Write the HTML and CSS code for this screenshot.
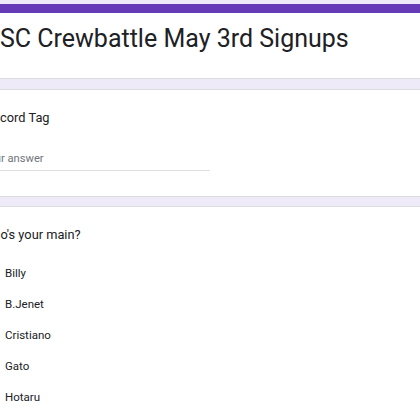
FILE: index.html
```html
<!DOCTYPE html>
<html lang="en">
<head>
<meta charset="utf-8">
<title>SC Crewbattle May 3rd Signups</title>
<link rel="stylesheet" href="styles.css">
</head>
<body>
<div class="page">
  <div class="card title-card">
    <h1 class="title">SC Crewbattle May 3rd Signups</h1>
  </div>
  <div class="card q-card tag-card">
    <div class="question">Discord Tag</div>
    <div class="answer">Your answer</div>
  </div>
  <div class="card q-card main-card">
    <div class="question">Who's your main?</div>
    <ul class="options">
      <li class="option"><span class="radio"></span><span class="label">Billy</span></li>
      <li class="option"><span class="radio"></span><span class="label">B.Jenet</span></li>
      <li class="option"><span class="radio"></span><span class="label">Cristiano</span></li>
      <li class="option"><span class="radio"></span><span class="label">Gato</span></li>
      <li class="option"><span class="radio"></span><span class="label">Hotaru</span></li>
    </ul>
  </div>
</div>
</body>
</html>
```
FILE: styles.css
```css
html, body {
  margin: 0;
  padding: 0;
  background: #efeaf7;
  overflow: hidden;
  height: 100%;
}

body {
  font-family: Roboto, "Liberation Sans", Arial, sans-serif;
  color: #202124;
}

.page {
  width: 700px;
  margin-left: -37px;
  padding-top: 4px;
}

.card {
  background: #ffffff;
  border: 1px solid #dadce0;
  border-radius: 8px;
}

.title-card {
  border-top: 9px solid #673ab7;
  padding: 10px 0 23px 36px;
}

.title {
  margin: 0;
  font-size: 25px;
  line-height: 32px;
  font-weight: 400;
  color: #202124;
  white-space: nowrap;
}

.q-card {
  padding-left: 18px;
}

.tag-card {
  margin-top: 10px;
  padding-top: 19.6px;
  padding-bottom: 25px;
}

.main-card {
  margin-top: 9px;
  padding-top: 19.6px;
  padding-bottom: 20px;
}

.question {
  font-size: 12.8px;
  line-height: 16px;
  white-space: nowrap;
}

.answer {
  margin-top: 26.4px;
  width: 228px;
  font-size: 11.2px;
  line-height: 14px;
  color: #70757a;
  padding-bottom: 4px;
  border-bottom: 1px solid #e0e0e0;
  white-space: nowrap;
}

.options {
  list-style: none;
  margin: 14.9px 0 0 0;
  padding: 0;
}

.option {
  display: flex;
  align-items: center;
  height: 31.1px;
  font-size: 11.5px;
  line-height: 14px;
}

.radio {
  flex: none;
  width: 10px;
  height: 10px;
  border: 2px solid #5f6368;
  border-radius: 50%;
  margin-right: 9px;
}
```
